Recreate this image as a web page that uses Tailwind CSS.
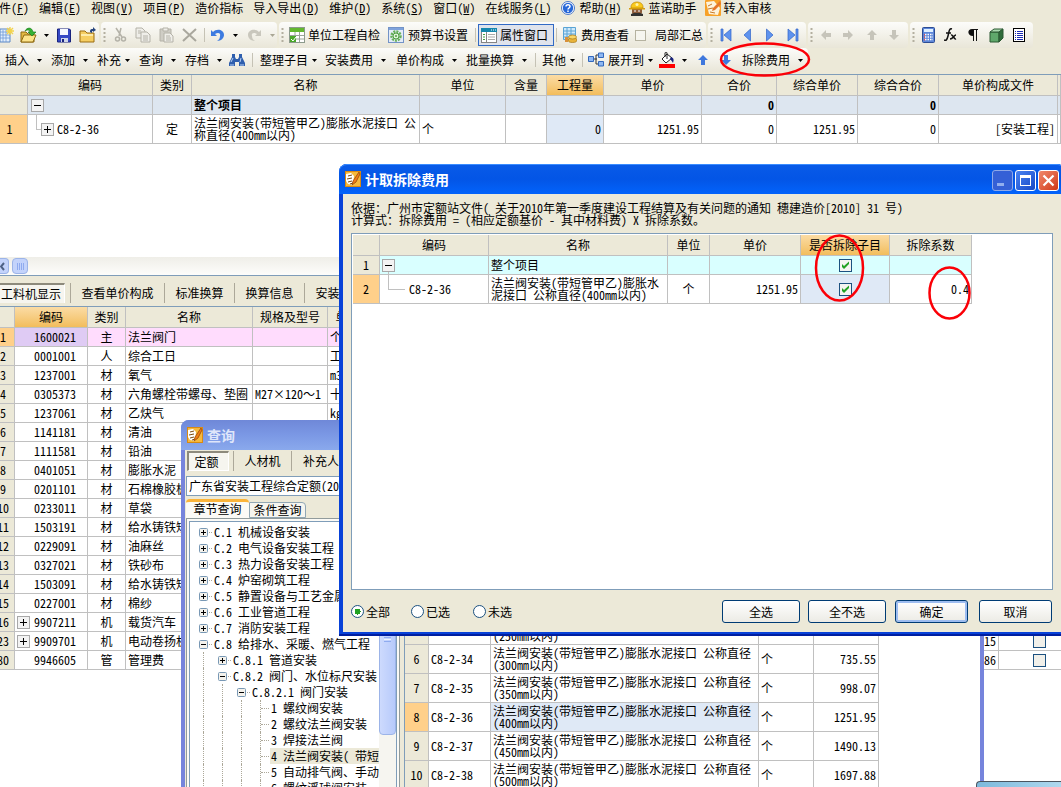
<!DOCTYPE html>
<html lang="zh-CN">
<head>
<meta charset="utf-8">
<title>计取拆除费用</title>
<script src="https://cdn.jsdelivr.net/npm/@tailwindcss/browser@4"></script>
</head>
<body class="bg-white text-black font-['Noto_Sans_Mono_CJK_SC','Noto_Sans_CJK_SC',sans-serif] text-[12px]/[12px]">

<svg class="hidden" aria-hidden="true">
  <symbol id="caret" viewBox="0 0 5 3"><path d="M0 0h5L2.5 3z" fill="currentColor"/></symbol>
  <symbol id="logo" viewBox="0 0 16 16"><rect width="16" height="16" fill="#d98a12"/><rect x="1" y="1" width="14" height="14" fill="#f6b93c"/><path d="M1 3l5-1 3 3-1 9-5-1-2-3z" fill="#fff"/><path d="M3 5l4-1M2 8l5-1M3 11l4-1M5 13l3-1" stroke="#7a4a10" fill="none"/><path d="M14 1L8 10l-1 4 4-3 4-8z" fill="#ef7d17" stroke="#8a3c05" stroke-width=".7"/></symbol>
  <symbol id="nav-first" viewBox="0 0 12 14"><path d="M1 1h2v12H1zM11 1v12L4 7z" fill="#5f93ee" stroke="#2f63c9" stroke-width=".7"/></symbol>
  <symbol id="nav-prev" viewBox="0 0 8 14"><path d="M7.500 1v12L1 7z" fill="#5f93ee" stroke="#2f63c9" stroke-width=".7"/></symbol>
  <symbol id="arrow" viewBox="0 0 12 12"><path d="M6 1l5 5H8v5H4V6H1z" fill="currentColor"/></symbol>
  <symbol id="tick" viewBox="0 0 13 13"><path d="M3 5v3l2 2 5-5V2.500L5 7z" fill="#21a121"/></symbol>
  <symbol id="plus" viewBox="0 0 9 9"><rect x=".5" y=".5" width="8" height="8" rx="1" fill="#f4f2ec" stroke="#7898b5"/><path d="M2 4.500h5M4.500 2v5" stroke="#000"/></symbol>
  <symbol id="minus" viewBox="0 0 9 9"><rect x=".5" y=".5" width="8" height="8" rx="1" fill="#f4f2ec" stroke="#7898b5"/><path d="M2 4.500h5" stroke="#000"/></symbol>
  <symbol id="gplus" viewBox="0 0 13 13"><rect x=".5" y=".5" width="12" height="12" fill="#f3f3f3" stroke="#a8a8a8"/><path d="M3 6.500h7M6.500 3v7" stroke="#000"/></symbol>
  <symbol id="gminus" viewBox="0 0 13 13"><rect x=".5" y=".5" width="12" height="12" fill="#f3f3f3" stroke="#a8a8a8"/><path d="M3 6.500h7" stroke="#000"/></symbol>
  <symbol id="grip" viewBox="0 0 4 16"><path d="M1.500 1v15" stroke="#b3afa0" stroke-width="2" stroke-dasharray="2 2"/></symbol>
</svg>

<div class="relative flex h-screen flex-col overflow-hidden">

  <!-- menu bar -->
  <nav class="flex h-[22px] shrink-0 items-start gap-[10px] overflow-hidden bg-[#ece9d8] pt-[2px] whitespace-nowrap">
    <button class="-ml-px">件(<u>F</u>)</button><button>编辑(<u>E</u>)</button><button>视图(<u>V</u>)</button><button>项目(<u>P</u>)</button><button>造价指标</button><button>导入导出(<u>D</u>)</button><button>维护(<u>D</u>)</button><button>系统(<u>S</u>)</button><button>窗口(<u>W</u>)</button><button>在线服务(<u>L</u>)</button>
    <button class="flex gap-1"><svg class="-mt-px size-[14px]" viewBox="0 0 14 14"><circle cx="7" cy="7" r="6.500" fill="#fff" stroke="#4c79c7"/><circle cx="7" cy="7" r="5.200" fill="#2868d8"/><path d="M5 5.500c0-2.500 4-2.500 4 0 0 1.500-2 1.500-2 3M7 9.500v1.500" stroke="#fff" stroke-width="1.500" fill="none"/></svg><span>帮助(<u>H</u>)</span></button>
    <button class="-ml-[2px] flex gap-[3px]"><svg class="-mt-[2px] size-4" viewBox="0 0 16 16"><path d="M3 8h10v4c0 5-10 5-10 0z" fill="#8c5b3a"/><path d="M2 14l3-1h6l3 1v2H2z" fill="#333"/><path d="M2 8C1 0 15 0 14 8z" fill="#fac91c" stroke="#b78405" stroke-width=".7"/><path d="M0 8h16v1.500H0z" fill="#d69d0c"/><circle cx="8" cy="4.500" r="1.500" fill="#fff3a8"/><path d="M5 11h2M9 11h2" stroke="#fff"/></svg>蓝诺助手</button>
    <button class="-ml-[2px] flex gap-[3px]"><svg class="-mt-[2px] size-4" viewBox="0 0 16 16"><rect width="16" height="16" rx="1" fill="#f7a128"/><path d="M1 2l8-1 6 7-2 7-9-1z" fill="#fdf3dc"/><path d="M3 6l4-2M3 9l5-1M5 12l5 1" stroke="#c77a2c"/><path d="M15 1L8 8l-1 3 3-1 6-6z" fill="#e5762a"/></svg>转入审核</button>
  </nav>

  <!-- toolbar 1 -->
  <div class="flex h-[26px] shrink-0 gap-[2px] overflow-hidden bg-[#ece9d8] whitespace-nowrap">
    <div class="flex w-[99px] shrink-0 items-center rounded-r bg-linear-to-b from-[#fcfcfa] to-[#e9e6d8]">
      <button class="mr-[6px]" aria-label="新建"><svg class="h-4 w-[14px]" viewBox="0 0 14 16"><path d="M0 2h10v13H0z" fill="#e4f0fc" stroke="#5b87c5"/><path d="M0 5h10M0 8h10M0 11h10M3 3v12M6 3v12" stroke="#6e9bd8" stroke-width=".8"/><path d="M10 0v8M6 4h8M7 1l6 6M13 1L7 7" stroke="#f3d34c" stroke-width="1.400"/></svg></button>
      <button class="mr-[7px]" aria-label="打开"><svg class="h-4 w-[17px]" viewBox="0 0 17 16"><path d="M1 5h5l2 2h6v8H1z" fill="#e3b842" stroke="#8f6a10"/><path d="M4 8h12l-3 7H1z" fill="#fde48b" stroke="#8f6a10"/><path d="M5 4c2-4 7-4 8 1h3l-4 4-4-4h2c-1-3-3-2-5-1z" fill="#35b335" stroke="#127512" stroke-width=".6"/></svg></button>
      <svg class="mr-[8px] h-[3px] w-[5px]"><use href="#caret"/></svg>
      <button class="mr-[8px]" aria-label="保存"><svg class="h-[15px] w-[14px]" viewBox="0 0 14 15"><path d="M.5 1h12l1 1v12H.5z" fill="#3548c4" stroke="#18237e"/><path d="M3 1h8v6H3z" fill="#f5f7ff"/><path d="M4 10h7v4H4z" fill="#cfd6ea"/><path d="M5 11h2v3H5z" fill="#18237e"/></svg></button>
      <button aria-label="目录"><svg class="h-4 w-[17px]" viewBox="0 0 17 16"><path d="M1 4h5l2 2h7v9H1z" fill="#f6ce62" stroke="#9a6d12"/><path d="M2 8h12" stroke="#fdebab" stroke-width="2"/><path d="M11 5c0-3 1-3 3-3V0l3 3-3 2V4c-1 0-1 0-1 2z" fill="#25447e"/></svg></button>
    </div>
    <div class="flex w-[176px] shrink-0 items-center rounded bg-linear-to-b from-[#fcfcfa] to-[#e9e6d8] pl-[2px]">
      <svg class="mr-[7px] h-4 w-1"><use href="#grip"/></svg>
      <button class="mr-[8px]" aria-label="剪切"><svg class="h-4 w-[13px]" viewBox="0 0 13 16" fill="none" stroke="#b4b2a8" stroke-width="1.500"><path d="M2 1l6 9M7 1L5 9"/><circle cx="3.500" cy="12" r="2"/><circle cx="9.500" cy="12" r="2"/></svg></button>
      <button class="mr-[8px]" aria-label="复制"><svg class="h-4 w-4" viewBox="0 0 16 16" fill="none" stroke="#b4b2a8"><path d="M1 1h6l3 3v7H1z" fill="#efeee9"/><path d="M6 5h6l3 3v7H6z" fill="#efeee9"/><path d="M3 4h3M3 6h3M8 9h5M8 11h5M8 13h5"/></svg></button>
      <button class="mr-[8px]" aria-label="粘贴"><svg class="h-4 w-[15px]" viewBox="0 0 15 16" stroke="#b4b2a8"><path d="M1 2h11v12H1z" fill="#cfcdc5"/><path d="M4 1h5v3H4z" fill="#efeee9"/><path d="M5 6h6l3 3v6H5z" fill="#efeee9"/><path d="M7 9h4M7 11h5M7 13h5"/></svg></button>
      <button class="mr-[7px]" aria-label="删除"><svg class="h-[14px] w-[15px]" viewBox="0 0 15 14"><path d="M1 1l13 12M14 1L1 13" stroke="#a9a79d" stroke-width="2"/></svg></button>
      <span class="mr-[6px] h-[14px] w-px bg-[#c5c2b5]"></span>
      <button class="mr-[9px]" aria-label="撤销"><svg class="h-[14px] w-[13px]" viewBox="0 0 13 14"><path d="M0 2v6h6L4 6c3-2 6-1 5 2 0 2-1 4-3 5 4 0 7-3 7-6 0-5-7-7-11-3z" fill="#3d7be0"/></svg></button>
      <svg class="mr-[10px] h-[3px] w-[5px]"><use href="#caret"/></svg>
      <button class="mr-[9px]" aria-label="重做"><svg class="h-[14px] w-[13px] -scale-x-100" viewBox="0 0 13 14"><path d="M0 2v6h6L4 6c3-2 6-1 5 2 0 2-1 4-3 5 4 0 7-3 7-6 0-5-7-7-11-3z" fill="#c9c7bd"/></svg></button>
      <svg class="h-[3px] w-[5px] text-[#aaa795]"><use href="#caret"/></svg>
    </div>
    <div class="flex w-[427px] shrink-0 items-center rounded bg-linear-to-b from-[#fcfcfa] to-[#e9e6d8] pl-[2px]">
      <svg class="mr-[4px] h-4 w-1"><use href="#grip"/></svg>
      <button class="mr-[8px] flex items-center gap-[3px]"><svg class="size-4" viewBox="0 0 16 16"><rect x=".5" y=".5" width="15" height="15" fill="#fff" stroke="#8c9a8c"/><path d="M1 1h14v4H1z" fill="#63b82f"/><path d="M1 8.500h14M1 12h14M6 5v10M10.500 5v10" stroke="#9aa59a"/><path d="M1 9h6v6H1z" fill="#49a829"/><path d="M2 12l2 2 3-4" stroke="#fff" fill="none"/></svg>单位工程自检</button>
      <button class="mr-[7px] flex items-center gap-[4px]"><svg class="size-4" viewBox="0 0 16 16"><rect x=".5" y=".5" width="15" height="15" fill="#e4ecf8" stroke="#7393c7"/><path d="M1 2h14" stroke="#7fa3dc" stroke-width="2"/><circle cx="8" cy="9" r="4.500" fill="none" stroke="#67b058" stroke-width="2.500" stroke-dasharray="2 1"/><circle cx="8" cy="9" r="3" fill="#dff3d8" stroke="#4f9c42"/><circle cx="8" cy="9" r="1" fill="#4f9c42"/></svg>预算书设置</button>
      <span class="mr-[2px] h-[14px] w-px bg-[#c5c2b5]"></span>
      <button class="mr-[2px] flex h-[22px] w-[76px] items-center gap-[3px] border border-[#316ac5] bg-[#dfe3ec] pl-[2px]"><svg class="h-[15px] w-4 shrink-0" viewBox="0 0 16 15"><rect x=".5" y=".5" width="15" height="14" fill="#fff" stroke="#858585"/><path d="M0 0h16v4H0z" fill="#1587ae"/><path d="M10 2h1M12 2h1M14 2h1" stroke="#fff"/><path d="M5.500 4v10" stroke="#858585"/><path d="M2 6.500h2M2 9h2M2 11.500h2" stroke="#42a342"/><path d="M7 6.500h7M7 9h7M7 11.500h7" stroke="#aaa"/></svg>属性窗口</button>
      <span class="mr-[6px] h-[14px] w-px bg-[#c5c2b5]"></span>
      <button class="mr-[6px] flex items-center gap-[4px]"><svg class="h-4 w-[14px]" viewBox="0 0 14 16"><path d="M.5.500h12v12H.5z" fill="#cfe9fa" stroke="#5aa4d5"/><path d="M1 4h12M1 7h12M1 10h12M4 1v12M8 1v12" stroke="#5aa4d5"/><ellipse cx="9.500" cy="13" rx="4.500" ry="2.500" fill="#e8b33a" stroke="#a47412" stroke-width=".7"/><ellipse cx="9.500" cy="10" rx="4" ry="2" fill="#f8d568" stroke="#a47412" stroke-width=".7"/><path d="M2 10h3v5H2z" fill="#d9913a"/></svg>费用查看</button>
      <label class="flex items-center gap-[9px]"><input type="checkbox" class="size-[11px] appearance-none border border-[#b5b2a0] bg-[#f6f5ef]">局部汇总</label>
    </div>
    <div class="flex w-[98px] shrink-0 items-center rounded bg-linear-to-b from-[#fcfcfa] to-[#e9e6d8] pl-[2px]">
      <svg class="mr-[6px] h-4 w-1"><use href="#grip"/></svg>
      <button class="mr-[11px]" aria-label="第一条"><svg class="h-[14px] w-[12px]"><use href="#nav-first"/></svg></button>
      <button class="mr-[15px]" aria-label="上一条"><svg class="h-[14px] w-[8px]"><use href="#nav-prev"/></svg></button>
      <button class="mr-[13px]" aria-label="下一条"><svg class="h-[14px] w-[8px] -scale-x-100"><use href="#nav-prev"/></svg></button>
      <button aria-label="最后一条"><svg class="h-[14px] w-[12px] -scale-x-100"><use href="#nav-first"/></svg></button>
    </div>
    <div class="flex w-[100px] shrink-0 items-center rounded bg-linear-to-b from-[#fcfcfa] to-[#e9e6d8] pl-[2px] text-[#c6c4ba]">
      <svg class="mr-[6px] h-4 w-1"><use href="#grip"/></svg>
      <button class="mr-[10px]" aria-label="左移"><svg class="size-3 -rotate-90"><use href="#arrow"/></svg></button>
      <button class="mr-[12px]" aria-label="右移"><svg class="size-3 rotate-90"><use href="#arrow"/></svg></button>
      <button class="mr-[10px]" aria-label="上移"><svg class="size-3"><use href="#arrow"/></svg></button>
      <button aria-label="下移"><svg class="size-3 rotate-180"><use href="#arrow"/></svg></button>
    </div>
    <div class="flex w-[123px] shrink-0 items-center rounded bg-linear-to-b from-[#fcfcfa] to-[#e9e6d8] pl-[2px]">
      <svg class="mr-[6px] h-4 w-1"><use href="#grip"/></svg>
      <button class="mr-[9px]" aria-label="计算器"><svg class="h-4 w-[13px]" viewBox="0 0 13 16"><rect x=".5" y=".5" width="12" height="15" rx="1" fill="#5d86d8" stroke="#2c4c94"/><path d="M2 2h9v3H2z" fill="#dff0ff"/><path d="M3 7.500h8M3 10h8M3 12.500h8" stroke="#fff" stroke-width="1.500" stroke-dasharray="1.500 1"/><path d="M2.500 7v7" stroke="#e05050" stroke-dasharray="1.500 1"/></svg></button>
      <button class="mr-[10px]" aria-label="函数"><svg class="h-[14px] w-[14px]" viewBox="0 0 14 14"><path d="M8 1C5 0 5 4 4 8s-2 5-4 4M2 5h5M7 7c2-1 3 5 5 4M12 7c-2 0-3 4-6 4" stroke="#111" stroke-width="1.500" fill="none"/></svg></button>
      <button class="mr-[11px]" aria-label="段落"><svg class="h-[12px] w-[10px]" viewBox="0 0 10 12"><path d="M4 0h6v1H9v11H8V1H6v11H5V7C-1 7-1 0 4 0z" fill="#111"/></svg></button>
      <button class="mr-[9px]" aria-label="三维"><svg class="size-[15px]" viewBox="0 0 15 15"><path d="M1 4h9v10H1z" fill="#5fa86b" stroke="#2b5933"/><path d="M1 4l4-3h9l-4 3z" fill="#a9d9ae" stroke="#2b5933"/><path d="M10 4l4-3v9l-4 4z" fill="#2f6b3a" stroke="#2b5933"/></svg></button>
      <button aria-label="列表"><svg class="h-[14px] w-3" viewBox="0 0 12 14"><rect x=".5" y=".5" width="11" height="13" fill="#fff" stroke="#000"/><path d="M2 3.500h1M4 3.500h6M2 5.500h1M4 5.500h6M2 7.500h1M4 7.500h6M2 9.500h1M4 9.500h6M2 11.500h1M4 11.500h6" stroke="#1c2cb5"/></svg></button>
    </div>
  </div>

  <!-- toolbar 2 -->
  <div class="flex h-[27px] shrink-0 overflow-hidden border-b border-[#7f9db9] bg-[#ece9d8] pb-[2px] whitespace-nowrap">
    <div class="flex w-[808px] shrink-0 items-center rounded-r bg-linear-to-b from-[#fcfcfa] to-[#e9e6d8] pl-[5px]">
      <button class="flex w-[46px] items-center gap-2">插入<svg class="h-[3px] w-[5px]"><use href="#caret"/></svg></button>
      <button class="flex w-[46px] items-center gap-2">添加<svg class="h-[3px] w-[5px]"><use href="#caret"/></svg></button>
      <button class="flex w-[42px] items-center gap-1">补充<svg class="h-[3px] w-[5px]"><use href="#caret"/></svg></button>
      <button class="flex w-[46px] items-center gap-2">查询<svg class="h-[3px] w-[5px]"><use href="#caret"/></svg></button>
      <button class="flex w-[44px] items-center gap-2">存档<svg class="h-[3px] w-[5px]"><use href="#caret"/></svg></button>
      <button class="mr-[7px]" aria-label="查找"><svg class="h-[14px] w-4" viewBox="0 0 16 14"><path d="M3 1h3v3l1 2h2l1-2V1h3v3l3 6v3h-6V9H6v4H0v-3l3-6z" fill="#2f5fae"/><path d="M2 9l2-4M11 9l1-4M1 12h4M11 12h4" stroke="#b8d2f5"/></svg></button>
      <span class="mr-[7px] h-[14px] w-px bg-[#c5c2b5]"></span>
      <button class="flex w-[65px] items-center gap-1">整理子目<svg class="h-[3px] w-[5px]"><use href="#caret"/></svg></button>
      <button class="flex w-[71px] items-center gap-2">安装费用<svg class="h-[3px] w-[5px]"><use href="#caret"/></svg></button>
      <button class="flex w-[70px] items-center gap-2">单价构成<svg class="h-[3px] w-[5px]"><use href="#caret"/></svg></button>
      <button class="flex w-[69px] items-center gap-2">批量换算<svg class="h-[3px] w-[5px]"><use href="#caret"/></svg></button>
      <span class="mr-[6px] h-[14px] w-px bg-[#c5c2b5]"></span>
      <button class="flex w-[40px] items-center gap-1">其他<svg class="h-[3px] w-[5px]"><use href="#caret"/></svg></button>
      <span class="mr-[5px] h-[14px] w-px bg-[#c5c2b5]"></span>
      <button class="flex w-[71px] items-center gap-1"><svg class="h-4 w-4" viewBox="0 0 16 16"><path d="M5 7h4M8 3v9M8 3h2M8 12h2" stroke="#333" fill="none"/><path d="M.5 4.500h5v5h-5zM10.500 1h5v4.500h-5zM10.500 9.500h5V14h-5z" fill="#8fb8f2" stroke="#3268bd"/></svg>展开到<svg class="h-[3px] w-[5px]"><use href="#caret"/></svg></button>
      <button class="flex w-[38px] items-center gap-[7px]" aria-label="填充颜色"><svg class="h-4 w-4" viewBox="0 0 16 16"><path d="M3 7l5-5 5 4-6 5z" fill="#fff" stroke="#222"/><path d="M8 7V1c0-1-2-1-2 0v4" fill="none" stroke="#222"/><path d="M12 5c3 1 3 3 2 6-1-2-2-3-3-4z" fill="#18237e"/><path d="M0 12h16v4H0z" fill="#f00"/></svg><svg class="h-[3px] w-[5px]"><use href="#caret"/></svg></button>
      <button class="mr-[11px] text-[#3f78dd]" aria-label="上移行"><svg class="size-3"><use href="#arrow"/></svg></button>
      <button class="mr-[10px] text-[#3f78dd]" aria-label="下移行"><svg class="size-3 rotate-180"><use href="#arrow"/></svg></button>
      <button class="flex items-center gap-2">拆除费用<svg class="h-[3px] w-[5px]"><use href="#caret"/></svg></button>
    </div>
  </div>

  <!-- project grid -->
  <div class="h-[182px] shrink-0 overflow-hidden bg-white">
    <table class="w-full table-fixed border-separate border-spacing-0 [&_td]:border-r [&_td]:border-b [&_td]:border-[#c0c0c0] [&_td]:px-[2px] [&_th]:border-r [&_th]:border-b [&_th]:border-[#c0c0c0] [&_th]:bg-[#ece9d8] [&_th]:font-normal">
      <colgroup><col class="w-[28px]"><col class="w-[125px]"><col class="w-[39px]"><col class="w-[228px]"><col class="w-[86px]"><col class="w-[41px]"><col class="w-[57px]"><col class="w-[98px]"><col class="w-[75px]"><col class="w-[81px]"><col class="w-[81px]"><col class="w-[119px]"><col></colgroup>
      <thead><tr class="h-[21px]"><th></th><th>编码</th><th>类别</th><th>名称</th><th>单位</th><th>含量</th><th class="bg-linear-to-b from-[#fbdca4] to-[#f2bd5b]">工程量</th><th>单价</th><th>合价</th><th>综合单价</th><th>综合合价</th><th>单价构成文件</th><th></th></tr></thead>
      <tbody>
        <tr class="h-[19px] bg-[#dde6f0] font-bold"><td class="bg-[#ece9d8]"></td><td><svg class="ml-px size-[13px]"><use href="#gminus"/></svg></td><td></td><td>整个项目</td><td></td><td></td><td></td><td></td><td class="text-right">0</td><td></td><td class="text-right">0</td><td></td><td></td></tr>
        <tr class="h-[29px]"><td class="bg-[#ffd08a] pr-[10px]! text-center">1</td><td><div class="flex items-center pl-[6px]"><span class="-mt-[14px] h-[15px] w-[5px] border-b border-l border-[#c0c0c0]"></span><svg class="mr-[3px] size-[13px]"><use href="#gplus"/></svg>C8-2-36</div></td><td class="text-center">定</td><td>法兰阀安装(带短管甲乙)膨胀水泥接口 公称直径(400mm以内)</td><td>个</td><td></td><td class="bg-[#dfe9f6] text-right">0</td><td class="text-right">1251.95</td><td class="text-right">0</td><td class="text-right">1251.95</td><td class="text-right">0</td><td class="text-right">[安装工程]</td><td></td></tr>
      </tbody>
    </table>
  </div>

  <!-- horizontal scrollbar -->
  <div class="flex h-[18px] shrink-0 gap-[3px] bg-linear-to-b from-[#efeee8] to-[#fdfdfb] py-px">
    <button class="h-4 w-[9px] rounded-r-sm border border-l-0 border-[#9cb4e8] bg-[#c3d3fb]" aria-label="向左滚动"><svg class="h-[9px] w-[6px]" viewBox="0 0 6 9"><path d="M4 1L1 4.500 4 8" stroke="#4d6185" stroke-width="2" fill="none"/></svg></button>
    <button class="flex h-4 w-4 items-center justify-center gap-px rounded-sm border border-[#9cb4e8] bg-[#c3d3fb]" aria-label="滚动块"><i class="h-[7px] w-px bg-[#8fabef]"></i><i class="h-[7px] w-px bg-[#8fabef]"></i><i class="h-[7px] w-px bg-[#8fabef]"></i><i class="h-[7px] w-px bg-[#8fabef]"></i></button>
  </div>

  <!-- lower pane tabs -->
  <div class="flex h-[32px] shrink-0 items-center overflow-hidden border-y border-[#7f9db9] bg-[#ece9d8] pt-[4px] whitespace-nowrap">
    <button class="mr-[5px] h-[20px] w-[65px] shrink-0 border-t-2 border-r border-t-[#8d8a7c] border-r-white bg-[#f6f5ef] pl-px text-left">工料机显示</button>
    <button class="h-[20px] w-[94px] border-l border-[#aca899]">查看单价构成</button>
    <button class="h-[20px] w-[70px] border-l border-[#aca899]">标准换算</button>
    <button class="h-[20px] w-[70px] border-l border-[#aca899]">换算信息</button>
    <button class="h-[20px] w-[70px] border-l border-[#aca899]">安装费用</button>
  </div>

  <!-- resource grid -->
  <div class="min-h-0 flex-1 overflow-hidden bg-white">
    <table class="w-[calc(100%+20px)] table-fixed border-separate border-spacing-0 whitespace-nowrap [&_td]:overflow-hidden [&_td]:border-r [&_td]:border-b [&_td]:border-[#c0c0c0] [&_td]:px-[2px] [&_th]:border-r [&_th]:border-b [&_th]:border-[#c0c0c0] [&_th]:bg-[#ece9d8] [&_th]:font-normal">
      <colgroup><col class="w-[15px]"><col class="w-[73px]"><col class="w-[38px]"><col class="w-[127px]"><col class="w-[75px]"><col class="w-[40px]"><col><col class="w-[82px]"></colgroup>
      <thead><tr class="h-[21px]"><th></th><th class="bg-linear-to-b from-[#fbdca4] to-[#f2bd5b]">编码</th><th>类别</th><th>名称</th><th>规格及型号</th><th>单位</th><th></th><th></th></tr></thead>
      <tbody id="resources"></tbody>
    </table>
  </div>

  <!-- query window -->
  <section class="absolute top-[420px] -bottom-[20px] left-[181px] flex w-[803px] flex-col rounded-t-lg bg-[#7684dc] px-[4px]">
    <header class="-mx-[4px] flex h-[30px] shrink-0 items-center gap-[4px] rounded-t-lg bg-linear-to-b from-[#6f88d8] via-[#7b98e5] to-[#8aa9ec] pl-[6px] text-[14px]/[14px] font-bold text-[#dfe6fa]"><svg class="size-4"><use href="#logo"/></svg>查询</header>
    <div class="flex min-h-0 flex-1 flex-col bg-[#ece9d8]">
      <div class="flex h-[26px] shrink-0 items-start pt-px pl-[2px] whitespace-nowrap">
        <button class="mr-[4px] h-[20px] w-[42px] border-t-2 border-r border-b border-l-2 border-t-[#8d8a7c] border-r-white border-b-white border-l-[#8d8a7c] bg-[#f6f5ef] pr-[4px]">定额</button>
        <button class="h-[20px] w-[58px] border-l border-[#aca899]">人材机</button>
        <button class="h-[20px] w-[84px] border-l border-[#aca899] pl-[11px] text-left">补充人材机</button>
      </div>
      <div class="flex min-h-0 flex-1">
        <div class="flex w-[215px] shrink-0 flex-col pl-px">
          <select aria-label="定额库" class="h-[20px] shrink-0 appearance-none border border-[#7f9db9] bg-white pl-[2px]"><option>广东省安装工程综合定额(2010)</option></select>
          <div class="mt-[3px] flex h-[19px] shrink-0 items-end">
            <button class="h-[19px] w-[63px] rounded-t-sm border-t-[3px] border-[#fbb43a] bg-[#fbfaf6] pb-[2px]">章节查询</button>
            <button class="h-[16px] w-[57px] rounded-tr-sm border border-[#91a7b4] bg-[#f6f5ef]">条件查询</button>
          </div>
          <div class="flex min-h-0 flex-1 border border-[#919b9c] bg-[#fbfaf6] p-[2px]">
            <div class="flex min-w-0 flex-1 overflow-hidden border border-[#7f9db9] bg-white">
              <ul id="tree" class="min-w-0 flex-1 overflow-hidden pt-[2px] pl-[4px] whitespace-nowrap"></ul>
              <div class="w-[17px] shrink-0 bg-[#f6f5f0]">
                <div class="flex h-[213px] flex-col items-center justify-center gap-px rounded-sm border border-[#9cb4e8] bg-linear-to-r from-[#cddafd] to-[#b7cafb] pt-[20px]"><i class="h-px w-[7px] bg-[#eef4fe]"></i><i class="h-px w-[7px] bg-[#8fabef]"></i><i class="h-px w-[7px] bg-[#eef4fe]"></i><i class="h-px w-[7px] bg-[#8fabef]"></i></div>
              </div>
            </div>
          </div>
        </div>
        <div class="ml-[4px] min-w-0 flex-1 border-t border-l border-[#7f9db9] bg-white pt-[2px]">
          <table class="w-[474px] table-fixed border-separate border-spacing-0 [&_td]:border-r [&_td]:border-b [&_td]:border-[#c0c0c0] [&_td]:px-[2px]">
            <colgroup><col class="w-[24px]"><col class="w-[62px]"><col class="w-[268px]"><col class="w-[55px]"><col class="w-[65px]"></colgroup>
            <tbody id="quota"></tbody>
          </table>
        </div>
      </div>
    </div>
  </section>

  <!-- window peeking in at the bottom -->
  <div class="absolute -right-[10px] bottom-0 left-[976px] h-[6px] rounded-tl-sm border-t border-l border-[#4a5560] bg-linear-to-r from-[#7db9dc] to-[#b5dcf0]"></div>

  <!-- demolition fee dialog -->
  <section class="absolute top-[164px] -right-[4px] left-[339px] flex h-[472px] flex-col rounded-t-lg bg-[#0842d8] px-[4px] pb-[4px] shadow-[inset_0_-2px_0_#001ea0]">
    <header class="-mx-[4px] flex h-[30px] shrink-0 items-center rounded-t-lg bg-linear-to-b from-[#0a5be8] via-[#0355e6] to-[#0263fb] pr-[6px] pl-[6px] shadow-[inset_0_1px_0_#3a8cff]">
      <svg class="mr-[4px] size-4"><use href="#logo"/></svg>
      <h1 class="flex-1 text-[14px]/[14px] font-bold text-white">计取拆除费用</h1>
      <div class="flex gap-[2px] pt-[3px]">
        <button aria-label="最小化" class="flex size-[21px] items-end rounded-[3px] border border-[#8fa9e8] bg-[#3560d6] pb-[4px] pl-[4px]"><i class="h-[3px] w-[7px] bg-[#92aeee]"></i></button>
        <button aria-label="最大化" class="flex size-[21px] items-center justify-center rounded-[3px] border border-white bg-linear-to-br from-[#4a83f2] to-[#1747c6]"><i class="size-[11px] border border-t-[3px] border-white"></i></button>
        <button aria-label="关闭" class="flex size-[21px] items-center justify-center rounded-[3px] border border-white bg-linear-to-br from-[#f0886a] to-[#cf3512]"><svg class="size-[13px]" viewBox="0 0 13 13"><path d="M1.500 1.500l10 10M11.500 1.500l-10 10" stroke="#fff" stroke-width="2.200"/></svg></button>
      </div>
    </header>
    <div class="flex min-h-0 flex-1 flex-col bg-[#ece9d8] pr-[8px] pl-[8px]">
      <p class="pt-[8px] pb-[7px] whitespace-nowrap">依据：广州市定额站文件( 关于2010年第一季度建设工程结算及有关问题的通知 穗建造价[2010] 31 号)<br>计算式：拆除费用 = (相应定额基价 - 其中材料费) X 拆除系数。</p>
      <div class="min-h-0 flex-1 border border-[#7f9db9] bg-white p-px">
        <table class="w-[619px] table-fixed border-separate border-spacing-0 [&_td]:border-r [&_td]:border-b [&_td]:border-[#c0c0c0] [&_td]:px-[2px] [&_th]:border-r [&_th]:border-b [&_th]:border-[#c0c0c0] [&_th]:bg-[#ece9d8] [&_th]:font-normal">
          <colgroup><col class="w-[27px]"><col class="w-[109px]"><col class="w-[179px]"><col class="w-[42px]"><col class="w-[91px]"><col class="w-[89px]"><col class="w-[82px]"></colgroup>
          <thead><tr class="h-[21px]"><th></th><th>编码</th><th>名称</th><th>单位</th><th>单价</th><th class="bg-linear-to-b from-[#fbdca4] to-[#f2bd5b]">是否拆除子目</th><th>拆除系数</th></tr></thead>
          <tbody>
            <tr class="h-[19px] bg-[#d9ffff]"><td class="bg-[#ece9d8] text-center">1</td><td><svg class="size-[13px]"><use href="#gminus"/></svg></td><td>整个项目</td><td></td><td></td><td><label class="relative mx-auto block size-[13px]"><input type="checkbox" checked aria-label="拆除整个项目" class="block size-[13px] appearance-none border border-[#1c5180] bg-[#f4f4f0]"><svg class="pointer-events-none absolute inset-0 size-[13px]"><use href="#tick"/></svg></label></td><td></td></tr>
            <tr class="h-[29px]"><td class="bg-[#ffd08a] text-center">2</td><td><div class="flex items-center pl-[6px]"><span class="mr-[4px] -mt-[17px] h-[18px] w-[17px] border-b border-l border-[#c0c0c0]"></span>C8-2-36</div></td><td>法兰阀安装(带短管甲乙)膨胀水泥接口 公称直径(400mm以内)</td><td class="text-center">个</td><td class="text-right">1251.95</td><td class="bg-[#dfe9f6]"><label class="relative mx-auto block size-[13px]"><input type="checkbox" checked aria-label="拆除C8-2-36" class="block size-[13px] appearance-none border border-[#1c5180] bg-[#f4f4f0]"><svg class="pointer-events-none absolute inset-0 size-[13px]"><use href="#tick"/></svg></label></td><td class="text-right">0.4</td></tr>
          </tbody>
        </table>
      </div>
      <div class="flex h-[42px] shrink-0 items-center pt-px">
        <label class="flex w-[60px] items-center gap-[2px]"><input type="radio" name="scope" checked class="size-[13px] appearance-none rounded-full border border-[#1c5180] bg-white bg-radial from-[#21a121] from-[3px] to-white to-[3px]">全部</label>
        <label class="flex w-[62px] items-center gap-[2px]"><input type="radio" name="scope" class="size-[13px] appearance-none rounded-full border border-[#1c5180] bg-white">已选</label>
        <label class="flex items-center gap-[2px]"><input type="radio" name="scope" class="size-[13px] appearance-none rounded-full border border-[#1c5180] bg-white">未选</label>
        <button class="mr-[8px] ml-auto h-[23px] w-[78px] rounded-[3px] border border-[#003c74] bg-linear-to-b from-white to-[#ecebe5]">全选</button>
        <button class="mr-[9px] h-[23px] w-[78px] rounded-[3px] border border-[#003c74] bg-linear-to-b from-white to-[#ecebe5]">全不选</button>
        <button class="mr-[11px] h-[23px] w-[73px] rounded-[3px] border border-[#003c74] bg-linear-to-b from-white to-[#ecebe5] shadow-[inset_0_0_0_2px_#9ebdf0]">确定</button>
        <button class="mr-px h-[23px] w-[73px] rounded-[3px] border border-[#003c74] bg-linear-to-b from-white to-[#ecebe5]">取消</button>
      </div>
    </div>
  </section>

  <!-- red pen marks -->
  <svg class="pointer-events-none absolute inset-0 size-full" fill="none" stroke="#fb0007" stroke-width="2.500"><ellipse cx="765" cy="59.500" rx="44" ry="16"/><ellipse cx="839.500" cy="268" rx="23.500" ry="32.500"/><ellipse cx="949.500" cy="293" rx="20" ry="25.500"/></svg>
</div>

<script>
const resources = [
  ['1','1600021','主','法兰阀门','','个'],['2','0001001','人','综合工日','','工日'],['3','1237001','材','氧气','','m3'],
  ['4','0305373','材','六角螺栓带螺母、垫圈','M27×120～1','十套'],['5','1237061','材','乙炔气','','kg'],['6','1141181','材','清油'],
  ['7','1111581','材','铅油'],['8','0401051','材','膨胀水泥'],['9','0201101','材','石棉橡胶板'],['10','0233011','材','草袋'],
  ['11','1503191','材','给水铸铁短管'],['12','0229091','材','油麻丝'],['13','0327021','材','铁砂布'],['14','1503091','材','给水铸铁短管'],
  ['15','0227001','材','棉纱'],['16','9907211','机','载货汽车'],['23','9909701','机','电动卷扬机','','','15'],['80','9946605','管','管理费','','','86']];
document.getElementById('resources').innerHTML = resources.map((r, i) => {
  const first = i === 0, group = r[0] === '16' || r[0] === '23';
  return `<tr class="${first ? 'h-[19px] bg-[#ffdcfd]' : 'h-[19px]'}">
    <td class="${first ? 'bg-[#ffd08a]' : 'bg-[#ece9d8]'}"><div class="-ml-[8px] flex justify-center">${r[0]}</div></td>
    <td class="${first ? 'bg-[#dfcbf4]' : ''}"><div class="flex items-center justify-end pr-[9px]">${group ? '<svg class="mr-[4px] size-[13px]"><use href="#gplus"/></svg>' : ''}${r[1]}</div></td>
    <td class="text-center">${r[2]}</td><td>${r[3]}</td><td>${r[4] || ''}</td><td>${r[5] || ''}</td>
    <td>${r[6] ? '<div class="text-right">' + r[6] + '</div>' : ''}</td>
    <td>${r[6] ? '<input type="checkbox" aria-label="选择" class="mx-auto block size-[13px] appearance-none border border-[#1c5180] bg-[#f1f0ea]">' : ''}</td></tr>`;
}).join('');

const tree = [[0,'+','C.1 机械设备安装'],[0,'+','C.2 电气设备安装工程'],[0,'+','C.3 热力设备安装工程'],[0,'+','C.4 炉窑砌筑工程'],
  [0,'+','C.5 静置设备与工艺金属'],[0,'+','C.6 工业管道工程'],[0,'+','C.7 消防安装工程'],[0,'-','C.8 给排水、采暖、燃气工程'],
  [1,'+','C.8.1 管道安装'],[1,'-','C.8.2 阀门、水位标尺安装'],[2,'-','C.8.2.1 阀门安装'],[3,'','1 螺纹阀安装'],[3,'','2 螺纹法兰阀安装'],
  [3,'','3 焊接法兰阀'],[3,'','4 法兰阀安装( 带短'],[3,'','5 自动排气阀、手动'],[3,'','6 螺纹浮球阀安装']];
document.getElementById('tree').innerHTML = tree.map(([depth, mark, text]) => {
  const rail = '<span class="ml-[9px] h-4 w-[10px] shrink-0 border-l border-dotted border-[#aca899]"></span>'.repeat(depth);
  const node = mark
    ? `<svg class="mr-px ml-[5px] size-[9px] shrink-0"><use href="${mark === '+' ? '#plus' : '#minus'}"/></svg><span class="mr-px w-[3px] shrink-0 border-t border-dotted border-[#aca899]"></span>`
    : '<span class="ml-[9px] flex h-4 w-[10px] shrink-0 items-center border-l border-dotted border-[#aca899]"><i class="w-2 border-t border-dotted border-[#aca899]"></i></span>';
  return `<li class="flex h-4 items-center">${rail}${node}<span class="${text.startsWith('4') ? 'bg-[#ece9d8] py-[2px] pl-px' : 'pl-px'}">${text}</span></li>`;
}).join('');

const prices = [['6','C8-2-34','300','735.55'],['7','C8-2-35','350','998.07'],['8','C8-2-36','400','1251.95'],['9','C8-2-37','450','1490.13'],['10','C8-2-38','500','1697.88']];
document.getElementById('quota').innerHTML =
  '<tr class="h-[137px]"><td class="bg-[#ece9d8]"></td><td></td><td></td><td></td><td></td></tr>' +
  '<tr class="h-[29px]"><td class="bg-[#ece9d8]"></td><td></td><td>法兰阀安装(带短管甲乙)膨胀水泥接口 公称直径 (250mm以内)</td><td></td><td></td></tr>' +
  prices.map(([n, code, size, price]) => `<tr class="h-[29px]">
    <td class="${n === '8' ? 'bg-[#ffd08a] text-center' : 'bg-[#ece9d8] text-center'}">${n}</td><td>${code}</td>
    <td class="${n === '8' ? 'bg-[#dfe9f6]' : ''}">法兰阀安装(带短管甲乙)膨胀水泥接口 公称直径 (${size}mm以内)</td><td>个</td><td class="text-right">${price}</td></tr>`).join('');
</script>
</body>
</html>
